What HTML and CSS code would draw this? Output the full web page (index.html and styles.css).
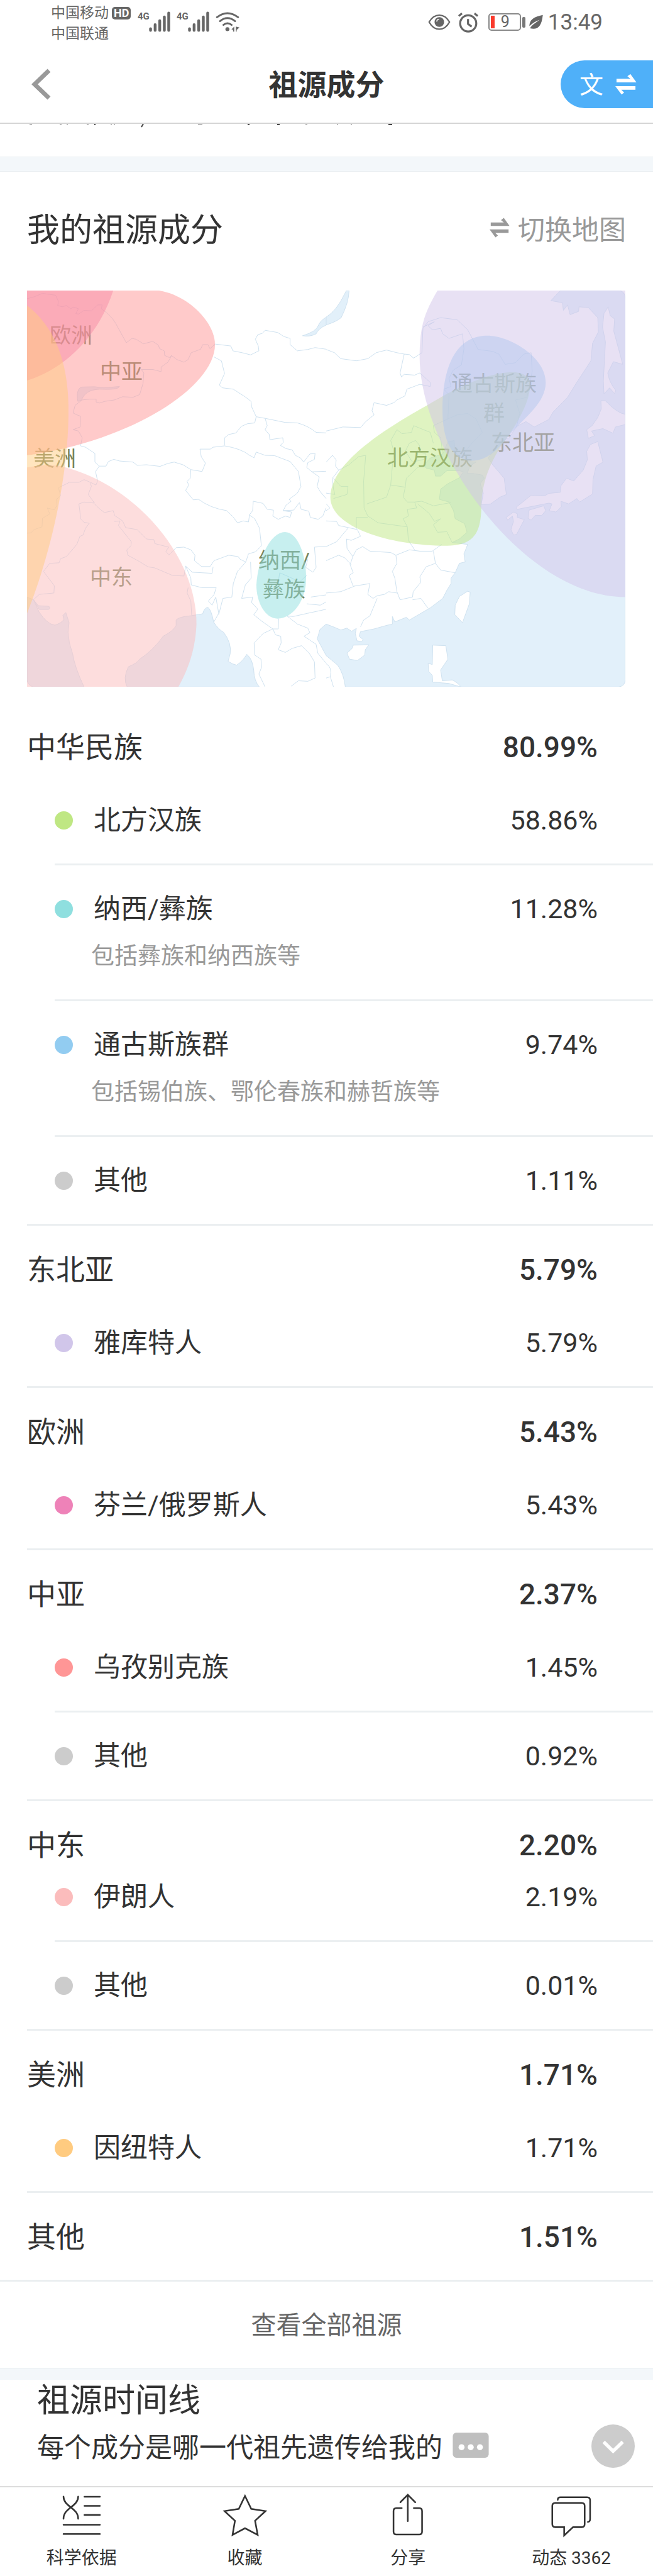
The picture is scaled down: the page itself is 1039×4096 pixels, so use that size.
FILE: index.html
```
<!DOCTYPE html>
<html lang="zh-CN">
  <head>
    <meta charset="utf-8" />
    <meta name="viewport" content="width=device-width, initial-scale=1" />
    <title>祖源成分</title>
    <link rel="stylesheet" href="styles.css">
  </head>
  <body>
    <div class="status">
      <div class="carriers">
        <div>中国移动<span class="hd">HD</span></div>
        <div>中国联通</div>
      </div>
      <div class="signal">
        <span>4G</span>
        <svg width="34" height="33" viewBox="557 56 107 102"><path d="M565 142v8M588 122v28M611 102v48M634 83v67M656 64v86" /></svg>
      </div>
      <div class="signal">
        <span>4G</span>
        <svg width="34" height="33" viewBox="557 56 107 102"><path d="M565 142v8M588 122v28M611 102v48M634 83v67M656 64v86" /></svg>
      </div>
      <svg class="wifi" width="39" height="33" viewBox="886 56 122 102">
        <path d="M893 85Q945 44 998 85M908 104Q945 74 983 104M925 123Q945 106 966 123" />
        <circle cx="945" cy="144" r="10" />
        <path class="fill" d="M965 145l14-14v25h-6v-9zM987 131v25h4v-8l14-12z" />
      </svg>
      <div class="status-right">
        <svg width="36" height="28" viewBox="64 65 112 88">
          <path class="line" d="M69 109C95 63 145 63 171 109C145 157 95 157 69 109Z" />
          <circle cx="120" cy="109" r="24" fill="#666" />
          <path d="M107 107Q108 96 119 95" fill="none" stroke="#fff" stroke-width="5" />
        </svg>
        <svg width="34" height="33" viewBox="208 57 104 103">
          <circle class="alarm" cx="260" cy="114" r="40" />
          <path class="alarm" d="M259 92v24l18 14M213 77l16-13M307 77l-16-13" />
        </svg>
        <div class="battery"><i></i><span>9</span></div>
        <svg class="leaf" width="22" height="24" viewBox="559 68 70 74">
          <path d="M628 69C585 78 560 92 560 126C575 112 590 102 612 94C595 107 575 117 563 137C600 146 622 130 628 69Z" fill="#666" />
        </svg>
        <span class="time">13:49</span>
      </div>
    </div>

    <header class="header">
      <button class="back" aria-label="返回">
        <svg width="32" height="52" viewBox="0 0 32 52"><path d="M28 4L5 26L28 48" /></svg>
      </button>
      <h1>祖源成分</h1>
      <button class="lang">
        <span>文</span>
        <svg width="34" height="34" viewBox="987 361 106 106"><path d="M993 387H1062L1047 374L1062 363L1092 405H993ZM1087 423V441H1017L1031 455L1018 465L987 423Z" /></svg>
      </button>
    </header>

    <div class="strip">
      <!-- bottom edge of the paragraph scrolled under the header -->
      <svg width="650" height="6" viewBox="0 0 650 6">
        <path class="faint" d="M47 1h4M95 1h3M106 1h2M138 1h3M176 1h2M181 1h2M315 1h7M486 1h3M536 1h2M558 1h2" />
        <path d="M228 0l-3 5M150 1h2M394 1h3M441 1h4M618 1h6" />
      </svg>
    </div>
    <div class="band"></div>

    <main>
      <div class="title-bar">
        <h2>我的祖源成分</h2>
        <button class="switch">
          <svg width="32" height="32" viewBox="987 361 106 106"><path d="M993 387H1062L1047 374L1062 363L1092 405H993ZM1087 423V441H1017L1031 455L1018 465L987 423Z" /></svg>
          切换地图
        </button>
      </div>

      <svg class="map" viewBox="0 0 952 630" role="img" aria-label="祖源地图">
        <g class="geo" transform="translate(-43.3 -19.2) scale(.3311 .4293)">
          <!-- lakes and the indian ocean -->
          <path class="water" d="M375 455C368 425 375 405 395 402L455 401L500 405L575 400C570 412 520 411 480 410C430 412 405 425 392 452Z" />
          <path class="water" d="M131 1180L162 1190L188 1234Q225 1280 265 1284Q300 1275 308 1262L303 1248L317 1237L333 1275L328 1310Q330 1350 350 1390Q360 1440 405 1513H160Q131 1505 131 1485Z" />
          <path class="water" d="M162 1190L185 1212L235 1214Q245 1220 235 1226L190 1226Z" />
          <path class="water" d="M612 1513Q590 1480 618 1438Q660 1425 672 1410Q740 1375 785 1325Q835 1305 847 1285V1265Q860 1253 920 1249L975 1242Q982 1220 1000 1218Q1015 1225 1028 1273Q1050 1300 1075 1310Q1115 1350 1107 1390L1097 1418Q1120 1430 1138 1432Q1165 1420 1187 1392Q1215 1410 1220 1450Q1222 1490 1247 1513Z" />
          <path class="water" d="M1455 212Q1520 197 1530 175Q1540 155 1570 143V172Q1530 185 1520 205Q1490 217 1455 212Z" />
          <!-- borders -->
          <path d="M131 75L165 68L205 55L230 58L268 62L282 85L278 100L300 105L320 100L340 112L355 106L378 112L365 130L378 132L405 118L440 120L470 98H492L488 112L510 125Q545 145 570 185L608 238L635 222L655 225L690 242L735 233L762 247L768 260L790 268L792 285L815 293L825 285L850 300L885 310L905 300L920 275L965 262L975 245H1000L1010 260L1035 243L1110 250L1120 268L1165 275L1205 283L1245 268L1242 250L1228 225L1240 208L1262 203L1275 192L1335 200L1365 215L1395 222V245L1430 268L1480 263L1515 256L1568 262" />
          <path d="M825 287L808 310L775 328V345L735 337H680L692 350L688 390L672 430L640 440L590 438L550 450L505 455L480 461L463 458V447H430L395 450L362 470L352 498L370 505L388 510L386 550L352 560L378 565L396 590L388 620L412 625L457 648V680L478 695L510 695L522 678L548 670L575 676L640 680L660 692L705 690L770 696L808 685L838 680L880 690L918 708L915 740L900 752L908 765L893 785L930 820L955 818Q1010 850 1090 860L1120 882L1142 905L1170 898L1195 902L1200 875L1215 860L1218 825L1265 833L1285 855L1315 858L1312 880L1338 892L1372 880L1395 885L1402 865L1362 860L1375 840L1400 825L1390 818L1430 795L1447 770L1435 715L1395 678Q1350 665 1320 656L1275 655L1232 643L1222 664L1200 655Q1160 630 1080 620L1025 625L1012 632L962 632L968 660L988 684L972 715L918 708" />
          <path d="M1028 290L1065 305L1080 352L1055 395L1070 405L1122 410L1182 440L1207 455L1210 475L1232 512L1225 535L1190 538L1160 548L1135 572L1100 578L1080 590V618M1232 512L1275 518L1370 533L1430 535Q1480 545 1520 570L1568 572M1275 518L1285 545L1275 560L1295 578L1298 597L1360 590L1362 608L1348 618L1375 630L1405 635L1420 655L1445 665L1460 680L1490 650L1515 648L1512 670L1480 682L1475 700L1500 716L1568 714M1500 716L1535 735L1525 770L1540 790L1568 815" />
          <path d="M478 695L460 715L470 750L462 765L435 755L405 745L380 755L335 755L282 775L292 805L272 818L275 840L262 857L228 850L240 872L205 888L203 920L165 930L150 942L131 943M435 757L440 770L425 800L455 832L405 828L380 835Q385 860 388 890L405 903L430 907L412 925L400 950L385 955L370 985L320 1030L292 1038L285 1053L240 1055L210 1085L262 1138L260 1165L190 1170L162 1190" />
          <path d="M455 835L475 850L502 867L545 860L552 878L590 898L605 923L660 930L705 965L740 967L745 982L812 995L798 1010L812 1024L848 997L885 995L918 1005L938 1025L935 1045L970 1067H1010L1030 1045L1100 1025L1145 1030L1155 1040L1182 1050L1195 1020L1230 1012L1257 990L1248 925L1225 890L1198 875M550 900L578 898L570 915L632 975L630 990L610 1005L615 1025L670 1048L712 1068L745 1072L830 1100L885 1102L893 1065L925 1088L1020 1092L1025 1068M893 1065L918 1110L920 1135L970 1145H1040L1030 1170L1002 1195L1020 1210L1038 1180L1052 1240L1028 1273M905 1145L900 1165L918 1195L922 1248M1052 1245L1072 1185L1115 1180L1122 1130L1142 1085L1182 1050M1205 1050L1208 1110L1180 1135L1162 1185L1215 1180L1210 1200L1240 1225L1220 1245L1260 1270L1312 1298L1265 1315L1222 1350L1225 1395L1255 1410L1258 1440L1245 1465L1275 1513" />
          <path d="M1340 1260L1338 1298H1312L1325 1320L1350 1325L1352 1350L1338 1375L1372 1385L1405 1370L1450 1360L1487 1388L1512 1420L1515 1480L1480 1492L1435 1490L1400 1510M1380 1250L1430 1280L1480 1295L1490 1312L1462 1325L1520 1355L1528 1388L1568 1425M1475 1205L1540 1210L1568 1198M1380 1250L1410 1252L1480 1240L1540 1230L1568 1225M1480 1040L1470 1070L1505 1088L1520 1070L1512 995L1568 992M1338 1125L1345 1090L1375 1100L1410 1112L1435 1128L1475 1100M1495 1180L1568 1172M1362 860L1412 858L1440 830L1448 855L1485 862L1492 885L1530 892L1552 880L1568 850" />
        </g>
        <g class="geo" transform="translate(476 -19.2) scale(.3311 .4293)">
          <path class="water" d="M0 143Q50 120 90 55L97 45H110Q108 90 72 145Q50 160 0 172Z" />
          <path class="water" d="M1125 45L1080 82L1135 90L1140 118L1160 98L1172 134L1213 122L1215 105L1260 108L1305 145L1308 198L1280 240L1272 305L1200 390L1160 440L1090 495L1070 522L1000 550L960 530L915 548L880 590L845 600L800 642L778 665L800 690L855 740L866 800L835 810L790 835L745 838L755 795L740 760L760 740L750 728L705 722L678 722L690 695L720 680L650 675L620 640L615 600L585 605L560 650L500 665L470 690L480 702L520 710L525 732L550 732L580 712L640 712L660 716L640 738L585 760L550 780L544 818L590 828L612 860L620 890L665 908L677 940L640 965L605 978L680 985L662 1020L668 1050L640 1055L620 1090L600 1110V1130L580 1155L560 1185L500 1220L400 1265L385 1255L330 1272L318 1252V1280L290 1285L230 1298L165 1308L158 1325L178 1338L170 1345L148 1342L140 1315L145 1296L122 1307L100 1295L70 1302L40 1292L0 1280L-30 1300L-43 1335L0 1397L55 1432Q85 1465 92 1513H1405Q1437 1510 1437 1485V75Q1437 48 1410 45Z" />
          <path class="land" d="M1355 105L1365 138L1386 150L1382 195L1425 318L1380 308L1353 350Q1360 385 1392 415L1385 426L1362 405L1335 427L1332 380L1342 235L1328 180L1335 130Z" />
          <path class="land" d="M1437 503Q1400 500 1340 452L1320 453L1322 483L1305 515L1278 545L1252 560L1260 592L1290 582L1275 565L1330 556L1378 573L1390 550L1437 541Z" />
          <path class="land" d="M1305 604L1270 615L1252 640L1255 672L1235 710L1190 750L1155 740L1128 768L1125 792L1070 796L1050 805L985 803L925 840Q905 850 918 855L1070 832L1085 835L1072 860L1105 865L1130 845L1128 825L1165 835L1205 815L1218 828L1280 798L1282 745L1297 695L1330 680Z" />
          <path class="land" d="M975 858L1045 842L1055 860L1035 878L1005 877L985 895L970 888Z" />
          <path class="land" d="M865 885L900 865L920 872L918 885L952 893L915 948L900 950L888 930L900 900L895 880L872 895Z" />
          <path class="land" d="M620 1210L640 1178L680 1158L692 1162L688 1205L655 1275L618 1245Z" />
          <path class="land" d="M100 1388L125 1370L130 1358L205 1357L188 1375L185 1395L150 1415L112 1410Z" />
          <path class="land" d="M512 1358L575 1360L585 1410L550 1450L558 1490L605 1487Q630 1495 648 1513L590 1500L560 1498L512 1495L510 1470L492 1455L490 1425L510 1430Z" />
          <path d="M0 263L40 275L70 297L145 305L200 297L240 275L290 265L340 275L375 280L355 350L362 365L375 355L425 358L450 350L500 385L500 400L450 392L388 410L378 435L340 450L325 460L290 470L230 460L220 490L230 505L190 530L165 552L80 550L0 565M375 280L400 282L420 295L460 275L465 185L490 160L550 145L630 153L680 190L730 263L800 270L830 280L860 318L910 312L950 280L985 275L990 345" />
          <path d="M465 180L520 160L490 175L510 190L550 185L560 205L590 222L655 205L662 260L650 320L610 340L590 370L600 400L565 410L590 430L585 520L630 505L680 500L720 520L750 570L700 610L660 650M990 345L965 440L910 450L930 500L915 548M585 520L515 545L520 570L550 590L560 650" />
          <path d="M0 680L30 655L48 672L45 695L60 710L30 740L35 780L42 800L0 795M0 835L18 850L0 860M60 710L110 690L155 660L190 655L180 750L182 850L200 880L250 905L390 920L395 970L425 1005M35 740L70 770L105 770L100 800L35 815M310 600L340 560L365 575L410 570L420 545L500 570L515 610M310 600L325 640L315 720L310 765L380 773L385 740L440 700L480 690M310 765L290 810L195 835M380 773L370 810L390 828L425 828L460 825L515 842L600 830M425 828L435 850L390 855L395 880L370 890L390 920M440 835L495 870L520 900L550 890L515 912L535 940L580 938L605 978M400 610L430 600L450 620L440 640L480 650L470 670L415 680L380 640Z" />
          <path d="M0 898L50 900L60 915L150 930L165 955L120 970L98 965L100 1000L128 1030L145 1005L175 993L210 1010L310 1015L335 1025L400 1005L450 1010L510 1010L555 985M0 993L50 975L105 925M145 930L145 885H200M128 1030L115 1060L130 1090L110 1100L130 1140L210 1130L200 1170L225 1185L245 1175L280 1170L300 1160L340 1165M335 1025L340 1055L318 1085L330 1110L340 1160L355 1190L415 1180L418 1160L455 1125L450 1105L480 1068L525 1055L515 1010M525 1055L550 1080L620 1090M415 1190L455 1185L490 1222M0 1045L45 1030L60 1025L90 1035L120 1060M0 1165L70 1160L135 1140M165 1290L180 1265L210 1250L245 1185M0 1427Q30 1440 20 1475L35 1513M20 1475L0 1480" />
        </g>
        <g class="places">
          <text x="70" y="71">欧洲</text>
          <text x="150" y="129">中亚</text>
          <text x="44" y="267">美洲</text>
          <text x="134" y="456">中东</text>
          <text x="409" y="429">纳西/</text>
          <text x="409" y="475">彝族</text>
          <text x="743" y="148">通古斯族</text>
          <text x="743" y="195">群</text>
          <text x="789" y="242">东北亚</text>
          <text x="641" y="266">北方汉族</text>
        </g>
        <g class="areas" transform="translate(-43.3 -19.2) scale(.3311 .4293)">
          <path fill="#ee82b8" d="M131 45H545C480 200 330 330 131 378Z" />
          <path fill="#ff9696" d="M131 45H765C900 60 1034 160 1034 245C1034 400 640 600 131 655Z" />
          <path fill="#fbbcbc" d="M131 700C200 690 240 688 290 695C620 750 945 1010 945 1280C940 1370 910 1440 858 1513H131Z" />
          <path fill="#ffcb80" d="M131 100C280 190 330 330 330 490C330 740 240 1030 131 1240Z" />
          <path fill="#8fdfdf" d="M1370 939C1430 939 1472 1020 1472 1110C1472 1200 1400 1260 1335 1260C1275 1260 1233 1200 1233 1135C1240 1040 1300 939 1370 939Z" />
        </g>
        <g class="areas" transform="translate(476 -19.2) scale(.3311 .4293)">
          <path fill="#bfe783" d="M900 347C960 350 985 370 980 400C975 470 900 560 840 620C760 720 745 790 745 860C740 950 700 988 580 990C300 990 20 920 20 810C20 680 300 550 485 470C620 405 780 347 900 347Z" />
          <path fill="#92ccf1" d="M775 212C880 212 1055 290 1055 385C1055 460 960 510 880 580C820 640 770 675 700 675C600 675 559 590 559 490C559 330 620 212 775 212Z" />
          <path fill="#d1c4e9" d="M535 45C470 130 449 180 449 290C450 640 950 1180 1437 1180V45Z" />
        </g>
      </svg>

      <section class="group">
        <h3>中华民族 <b>80.99%</b></h3>
        <ul>
          <li><div class="row"><i class="dot green"></i>北方汉族 <span>58.86%</span></div></li>
          <li>
            <div class="row"><i class="dot teal"></i>纳西/彝族 <span>11.28%</span></div>
            <p>包括彝族和纳西族等</p>
          </li>
          <li>
            <div class="row"><i class="dot blue"></i>通古斯族群 <span>9.74%</span></div>
            <p>包括锡伯族、鄂伦春族和赫哲族等</p>
          </li>
          <li><div class="row"><i class="dot"></i>其他 <span>1.11%</span></div></li>
        </ul>
      </section>

      <section class="group">
        <h3>东北亚 <b>5.79%</b></h3>
        <ul>
          <li><div class="row"><i class="dot purple"></i>雅库特人 <span>5.79%</span></div></li>
        </ul>
      </section>

      <section class="group">
        <h3>欧洲 <b>5.43%</b></h3>
        <ul>
          <li><div class="row"><i class="dot pink"></i>芬兰/俄罗斯人 <span>5.43%</span></div></li>
        </ul>
      </section>

      <section class="group">
        <h3>中亚 <b>2.37%</b></h3>
        <ul>
          <li><div class="row"><i class="dot red"></i>乌孜别克族 <span>1.45%</span></div></li>
          <li><div class="row"><i class="dot"></i>其他 <span>0.92%</span></div></li>
        </ul>
      </section>

      <section class="group tight">
        <h3>中东 <b>2.20%</b></h3>
        <ul>
          <li><div class="row"><i class="dot rose"></i>伊朗人 <span>2.19%</span></div></li>
          <li><div class="row"><i class="dot"></i>其他 <span>0.01%</span></div></li>
        </ul>
      </section>

      <section class="group">
        <h3>美洲 <b>1.71%</b></h3>
        <ul>
          <li><div class="row"><i class="dot orange"></i>因纽特人 <span>1.71%</span></div></li>
        </ul>
      </section>

      <section class="group last">
        <h3>其他 <b>1.51%</b></h3>
      </section>

      <button class="all">查看全部祖源</button>
    </main>

    <div class="band small"></div>

    <section class="timeline">
      <h2>祖源时间线</h2>
      <div class="timeline-row">
        <p>每个成分是哪一代祖先遗传给我的</p>
        <button class="more" aria-label="更多">
          <svg width="58" height="40" viewBox="390 57 180 126"><rect x="390" y="57" width="180" height="126" rx="18" fill="#bfbfbf" /><g fill="#fff"><circle cx="434" cy="130" r="15" /><circle cx="480" cy="130" r="15" /><circle cx="526" cy="130" r="15" /></g></svg>
        </button>
        <button class="down" aria-label="展开">
          <svg width="69" height="69" viewBox="1074 21 216 216"><circle cx="1182" cy="129" r="108" fill="#ccc" /><path d="M1135 108L1182 154L1230 108" fill="none" stroke="#fff" stroke-width="17" /></svg>
        </button>
      </div>
    </section>

    <nav class="tabs">
      <a href="#science">
        <svg viewBox="113 62 225 225"><path d="M135 80C135 130 208 135 208 190M208 80C208 130 135 135 135 190M239 81H316M239 126H316M239 171H316M135 220H316M135 266H316" /></svg>
        科学依据
      </a>
      <a href="#favorite">
        <svg viewBox="923 62 225 225"><path d="M1035 77L1066 141L1137 152L1085 200L1098 270L1035 237L973 270L985 200L933 152L1004 141Z" /></svg>
        收藏
      </a>
      <a href="#share">
        <svg viewBox="53 362 225 225"><path d="M165 502V371M128 408L165 371L202 408M135 437H108Q94 437 94 452V554Q94 568 108 568H222Q236 568 236 554V452Q236 437 222 437H195" /></svg>
        分享
      </a>
      <a href="#feed">
        <svg viewBox="863 362 225 225"><path d="M896 411H1027Q1042 411 1042 426V517Q1042 532 1027 532H984L940 573V532H896Q881 532 881 517V426Q881 411 896 411ZM908 396Q908 383 922 383H1054Q1069 383 1069 398V490Q1069 505 1058 506" /></svg>
        动态 3362
      </a>
    </nav>
  </body>
</html>
```
FILE: styles.css
```
* {
  box-sizing: border-box;
}

body {
  margin: 0;
  background: #fff;
  color: #333;
  font-family: Roboto, "Noto Sans CJK SC", sans-serif;
  font-size: 43px;
}

h1,
h2,
h3,
p,
ul {
  margin: 0;
  padding: 0;
  font-weight: 400;
}

button {
  border: none;
  padding: 0;
  background: none;
  color: inherit;
  font: inherit;
  cursor: pointer;
}

svg {
  display: block;
  flex: none;
}

/* status bar */
.status {
  display: flex;
  height: 72px;
  padding: 4px 80px 0 81px;
  color: #666;
}

.carriers {
  width: 138px;
  font-size: 23px;
  line-height: 33px;
}

.carriers div {
  display: flex;
  align-items: center;
}

.hd {
  margin-left: 5px;
  padding: 0 3px;
  border-radius: 5px;
  background: #666;
  color: #fff;
  font-size: 18px;
  font-weight: 700;
  line-height: 20px;
}

.signal {
  display: flex;
  width: 62px;
  padding-top: 14px;
}

.signal span {
  width: 18px;
  font-size: 15px;
  font-weight: 700;
  line-height: 16px;
}

.signal path,
.wifi path {
  fill: none;
  stroke: #666;
  stroke-width: 14;
  stroke-linecap: round;
}

.wifi {
  margin-top: 14px;
}

.wifi path {
  stroke-width: 9;
}

.wifi circle,
.wifi .fill {
  fill: #666;
  stroke: none;
}

.status-right {
  display: flex;
  align-items: center;
  height: 62px;
  margin-left: auto;
}

.status-right svg {
  margin-right: 11px;
}

.line {
  fill: none;
  stroke: #666;
  stroke-width: 7;
}

.alarm {
  fill: none;
  stroke: #666;
  stroke-width: 10;
}

.battery {
  position: relative;
  display: flex;
  width: 52px;
  height: 28px;
  margin: 0 13px 0 4px;
  border: 2px solid #888;
  border-radius: 5px;
  font-size: 25px;
  line-height: 24px;
}

.battery i {
  width: 6px;
  margin: 2px 10px 2px 2px;
  background: #f93a2c;
}

.battery:after {
  content: "";
  position: absolute;
  top: 4px;
  right: -9px;
  width: 5px;
  height: 17px;
  border-radius: 2px;
  background: #777;
}

.status-right .leaf {
  margin-right: 8px;
}

.time {
  font-size: 35px;
}

/* header */
.header {
  display: grid;
  grid-template-columns: 1fr auto 1fr;
  align-items: center;
  height: 125px;
  border-bottom: 2px solid #d5d5d5;
}

.header h1 {
  padding-bottom: 5px;
  font-size: 46px;
  font-weight: 700;
}

.back {
  justify-self: start;
  padding: 10px 50px;
}

.back path {
  fill: none;
  stroke: #999;
  stroke-width: 7;
}

.lang {
  display: flex;
  align-items: center;
  justify-content: space-between;
  justify-self: end;
  width: 147px;
  height: 76px;
  padding: 0 26px 0 30px;
  border-radius: 38px 0 0 38px;
  background: #4fb0f9;
  color: #fff;
  font-size: 38px;
}

.lang span {
  padding-bottom: 4px;
}

.lang path {
  fill: #fff;
}

.strip {
  height: 52px;
}

.strip path {
  stroke: #444;
  stroke-width: 2;
}

.strip .faint {
  stroke: #bbb;
}

.band {
  height: 24px;
  border-top: 1px solid #e8edf0;
  border-bottom: 1px solid #e8edf0;
  background: #f3f7fa;
}

.band.small {
  height: 19px;
  border-bottom: none;
}

/* map */
.title-bar {
  display: flex;
  align-items: center;
  justify-content: space-between;
  height: 177px;
  margin-bottom: 12px;
  padding: 0 43px;
}

h2 {
  font-size: 52px;
}

.switch {
  display: flex;
  align-items: center;
  gap: 13px;
  color: #999;
}

.switch path {
  fill: #999;
}

.map {
  width: calc(100% - 87px);
  margin: 0 43px 26px;
}

.geo path {
  fill: none;
  stroke: #cfe2f0;
  stroke-width: 1;
  stroke-linejoin: round;
  vector-effect: non-scaling-stroke;
}

.geo .water {
  fill: #e2f0fa;
}

.geo .land {
  fill: #fff;
}

.places text {
  fill: #76835a;
  font-size: 34px;
  text-anchor: middle;
  dominant-baseline: central;
}

.areas path {
  opacity: 0.5;
}

/* composition list */
.group h3 {
  display: flex;
  justify-content: space-between;
  padding: 46px 88px 23px 43px;
  font-size: 46px;
  line-height: 48px;
}

.group b {
  font-weight: 500;
}

.group li {
  margin-left: 87px;
  padding: 45px 0;
  border-bottom: 3px solid #ebeff1;
  list-style-type: none;
}

.group li:last-child {
  margin-left: 43px;
  padding-left: 44px;
}

.row {
  display: flex;
  align-items: center;
  padding-right: 88px;
  line-height: 48px;
}

.row span {
  margin-left: auto;
}

.group p {
  margin: 29px 0 0 58px;
  color: #999;
  font-size: 37px;
  line-height: 46px;
}

.dot {
  width: 29px;
  height: 29px;
  margin-right: 33px;
  border-radius: 50%;
  background: #ccc;
}

.green {
  background: #bfe783;
}
.teal {
  background: #8fdfdf;
}
.blue {
  background: #92ccf1;
}
.purple {
  background: #d1c6ea;
}
.pink {
  background: #ee82b8;
}
.red {
  background: #ff9696;
}
.rose {
  background: #fbbcbc;
}
.orange {
  background: #ffcb80;
}

.tight h3 {
  padding-bottom: 0;
}

.tight li:first-child {
  padding-top: 34px;
}

.last {
  padding-bottom: 21px;
  border-bottom: 3px solid #ebeff1;
}

.all {
  display: block;
  width: 100%;
  height: 137px;
  padding-bottom: 6px;
  color: #666;
  font-size: 40px;
}

/* timeline */
.timeline {
  padding: 4px 29px 29px 59px;
}

.timeline h2 {
  line-height: 60px;
}

.timeline-row {
  display: flex;
  align-items: center;
  margin-top: 7px;
}

.timeline-row p,
.more {
  padding-bottom: 4px;
}

.more {
  margin-left: 16px;
}

.down {
  margin-left: auto;
}

/* bottom tabs */
.tabs {
  display: flex;
  height: 143px;
  border-top: 2px solid #ddd;
}

.tabs a {
  display: flex;
  flex: 1;
  flex-direction: column;
  align-items: center;
  gap: 12px;
  padding-top: 9px;
  color: #333;
  font-size: 28px;
  line-height: 40px;
  text-decoration: none;
}

.tabs svg {
  width: 72px;
  height: 72px;
}

.tabs path {
  fill: none;
  stroke: #333;
  stroke-width: 8;
  stroke-linecap: round;
}
```
